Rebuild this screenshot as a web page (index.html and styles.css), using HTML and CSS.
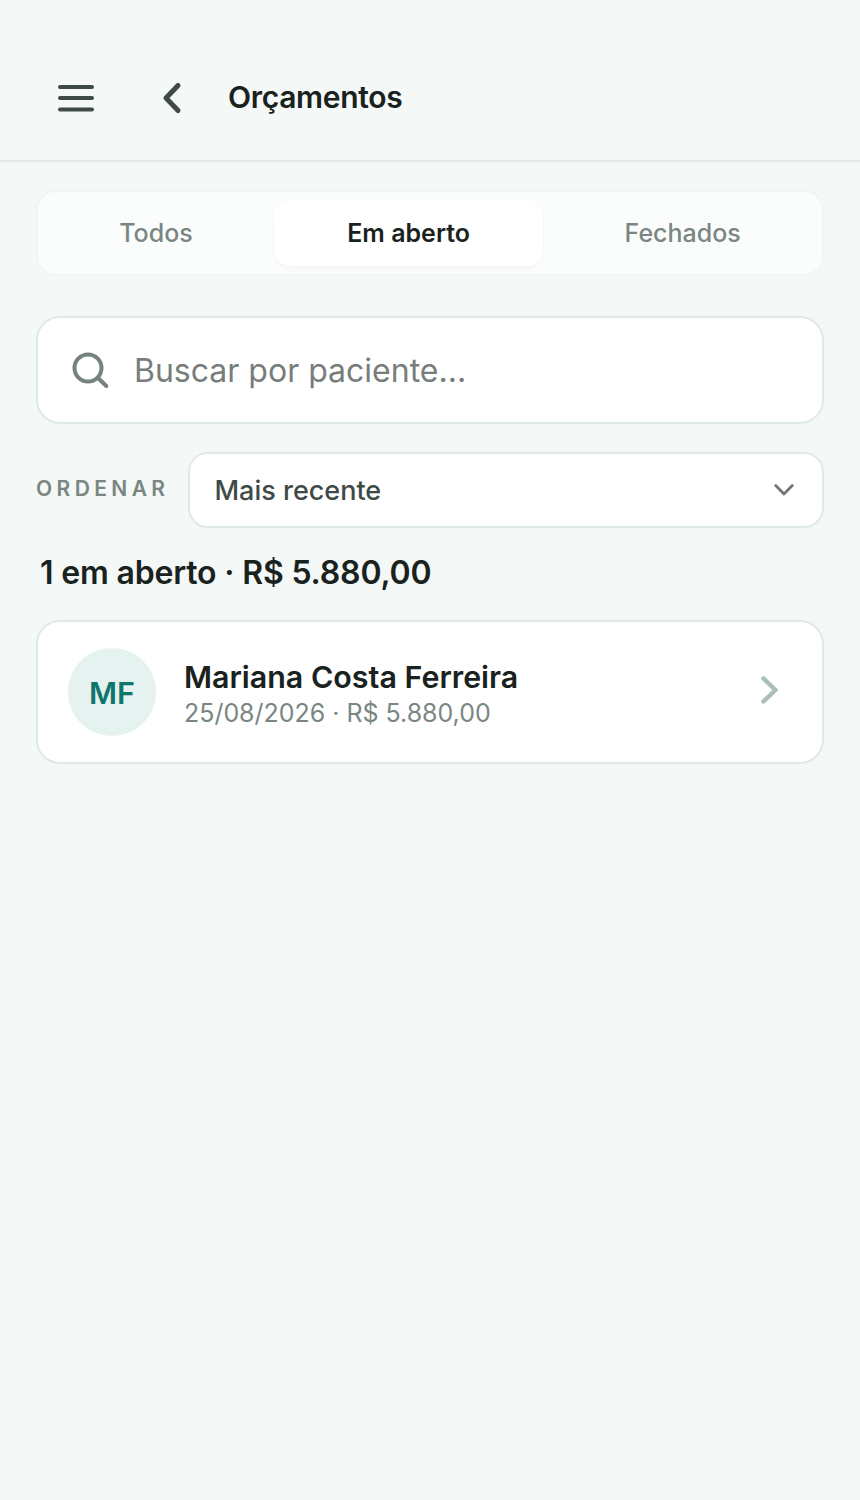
FILE: index.html
```html
<!DOCTYPE html>
<html lang="pt-BR">
<head>
    <meta charset="UTF-8">
    <meta name="viewport" content="width=device-width, initial-scale=1.0">
    <title>Orçamentos</title>
    <link rel="stylesheet" href="styles.css">
</head>
<body>
    <header class="topbar">
        <button type="button" class="icon-btn menu-btn" aria-label="Menu">
            <svg width="40" height="40" viewBox="0 0 40 40" fill="none" stroke="#3f4a47" stroke-width="4" stroke-linecap="round">
                <path d="M4 10h32M4 21h32M4 32.500h32"/>
            </svg>
        </button>
        <button type="button" class="icon-btn back-btn" aria-label="Voltar">
            <svg width="24" height="36" viewBox="0 0 24 36" fill="none" stroke="#3f4a47" stroke-width="5" stroke-linecap="round" stroke-linejoin="round">
                <path d="M18 6.500 6 19l12 12.500"/>
            </svg>
        </button>
        <h1>Orçamentos</h1>
    </header>

    <main class="content">
        <div class="tabs">
            <div class="tab">Todos</div>
            <div class="tab active">Em aberto</div>
            <div class="tab">Fechados</div>
        </div>

        <div class="search">
            <svg width="40" height="40" viewBox="0 0 40 40" fill="none" stroke="#75827d" stroke-width="4" stroke-linecap="round">
                <circle cx="16" cy="18" r="13.500"/>
                <path d="M26 28l8.300 8"/>
            </svg>
            <span class="search-text">Buscar por paciente...</span>
        </div>

        <div class="sort">
            <span class="sort-label">ORDENAR</span>
            <div class="select">
                <span>Mais recente</span>
                <svg width="24" height="24" viewBox="0 0 24 24" fill="none" stroke="#6f7673" stroke-width="2.800" stroke-linecap="round" stroke-linejoin="round">
                    <path d="M3.700 7.500 12 16l8.300-8.500"/>
                </svg>
            </div>
        </div>

        <h2 class="summary">1 em aberto · R$ 5.880,00</h2>

        <div class="card">
            <div class="avatar">MF</div>
            <div class="card-info">
                <div class="card-name">Mariana Costa Ferreira</div>
                <div class="card-meta">25/08/2026 · R$ 5.880,00</div>
            </div>
            <svg class="card-arrow" width="20" height="30" viewBox="0 0 20 30" fill="none" stroke="#a9c0b8" stroke-width="4.500" stroke-linecap="round" stroke-linejoin="round">
                <path d="M3.500 3.500 15.500 15 3.500 26.500"/>
            </svg>
        </div>
    </main>
</body>
</html>
```

FILE: styles.css
```css
* {
    box-sizing: border-box;
}
body {
    font-family: Inter, "Liberation Sans", sans-serif;
    margin: 0;
    min-height: 1500px;
    background-color: #f4f8f7;
    color: #1a2220;
}
.topbar {
    display: flex;
    align-items: center;
    height: 162px;
    padding: 34px 0 0 56px;
    border-bottom: 2px solid #e2e9e7;
}
.topbar h1 {
    margin: 0;
    font-size: 30px;
    font-weight: 600;
    letter-spacing: -0.3px;
}
.icon-btn {
    display: flex;
    padding: 0;
    border: none;
    background: none;
}
.menu-btn {
    margin-right: 64px;
}
.back-btn {
    margin-right: 44px;
}
.content {
    padding: 28px 36px 0;
}
.tabs {
    display: flex;
    gap: 8px;
    padding: 8px;
    border: 2px solid #f1f6f4;
    border-radius: 20px;
    background-color: #fbfdfc;
}
.tab {
    flex: 1 1 auto;
    padding: 0 10px;
    height: 66px;
    line-height: 66px;
    text-align: center;
    font-size: 25px;
    font-weight: 500;
    color: #7a8682;
    border-radius: 16px;
}
.tab.active {
    background-color: #fff;
    color: #1a2220;
    font-weight: 600;
    box-shadow: 0 2px 4px rgba(20, 40, 35, 0.04);
}
.search {
    display: flex;
    align-items: center;
    gap: 22px;
    height: 108px;
    margin-top: 40px;
    padding: 0 34px;
    background-color: #fff;
    border: 2px solid #deeae6;
    border-radius: 24px;
}
.search-text {
    font-size: 32px;
    color: #767d7b;
}
.sort {
    display: flex;
    align-items: center;
    gap: 19px;
    margin-top: 28px;
}
.sort-label {
    margin-top: -4px;
    font-size: 21px;
    font-weight: 600;
    letter-spacing: 4.400px;
    color: #7a8682;
}
.select {
    flex: 1;
    display: flex;
    align-items: center;
    justify-content: space-between;
    height: 76px;
    padding: 0 26px 0 24px;
    background-color: #fff;
    border: 2px solid #deeae6;
    border-radius: 20px;
    font-size: 27px;
    font-weight: 500;
    color: #3f4a47;
}
.summary {
    margin: 25px 0 0;
    padding-left: 4px;
    font-size: 32px;
    line-height: 40px;
    font-weight: 600;
    letter-spacing: -0.18px;
}
.card {
    display: flex;
    align-items: center;
    height: 144px;
    margin-top: 27px;
    padding: 0 42px 0 30px;
    background-color: #fff;
    border: 2px solid #deeae6;
    border-radius: 24px;
}
.avatar {
    flex: none;
    width: 88px;
    height: 88px;
    margin-right: 28px;
    border-radius: 50%;
    background-color: #e6f2ef;
    color: #0f766e;
    font-size: 30.400px;
    font-weight: 600;
    line-height: 90px;
    text-align: center;
}
.card-info {
    flex: 1;
    padding-top: 6px;
}
.card-name {
    font-size: 30.400px;
    font-weight: 600;
    line-height: 36px;
}
.card-meta {
    font-size: 24.960px;
    line-height: 36px;
    color: #7a8682;
}
.card-arrow {
    margin-top: -4px;
}
```
